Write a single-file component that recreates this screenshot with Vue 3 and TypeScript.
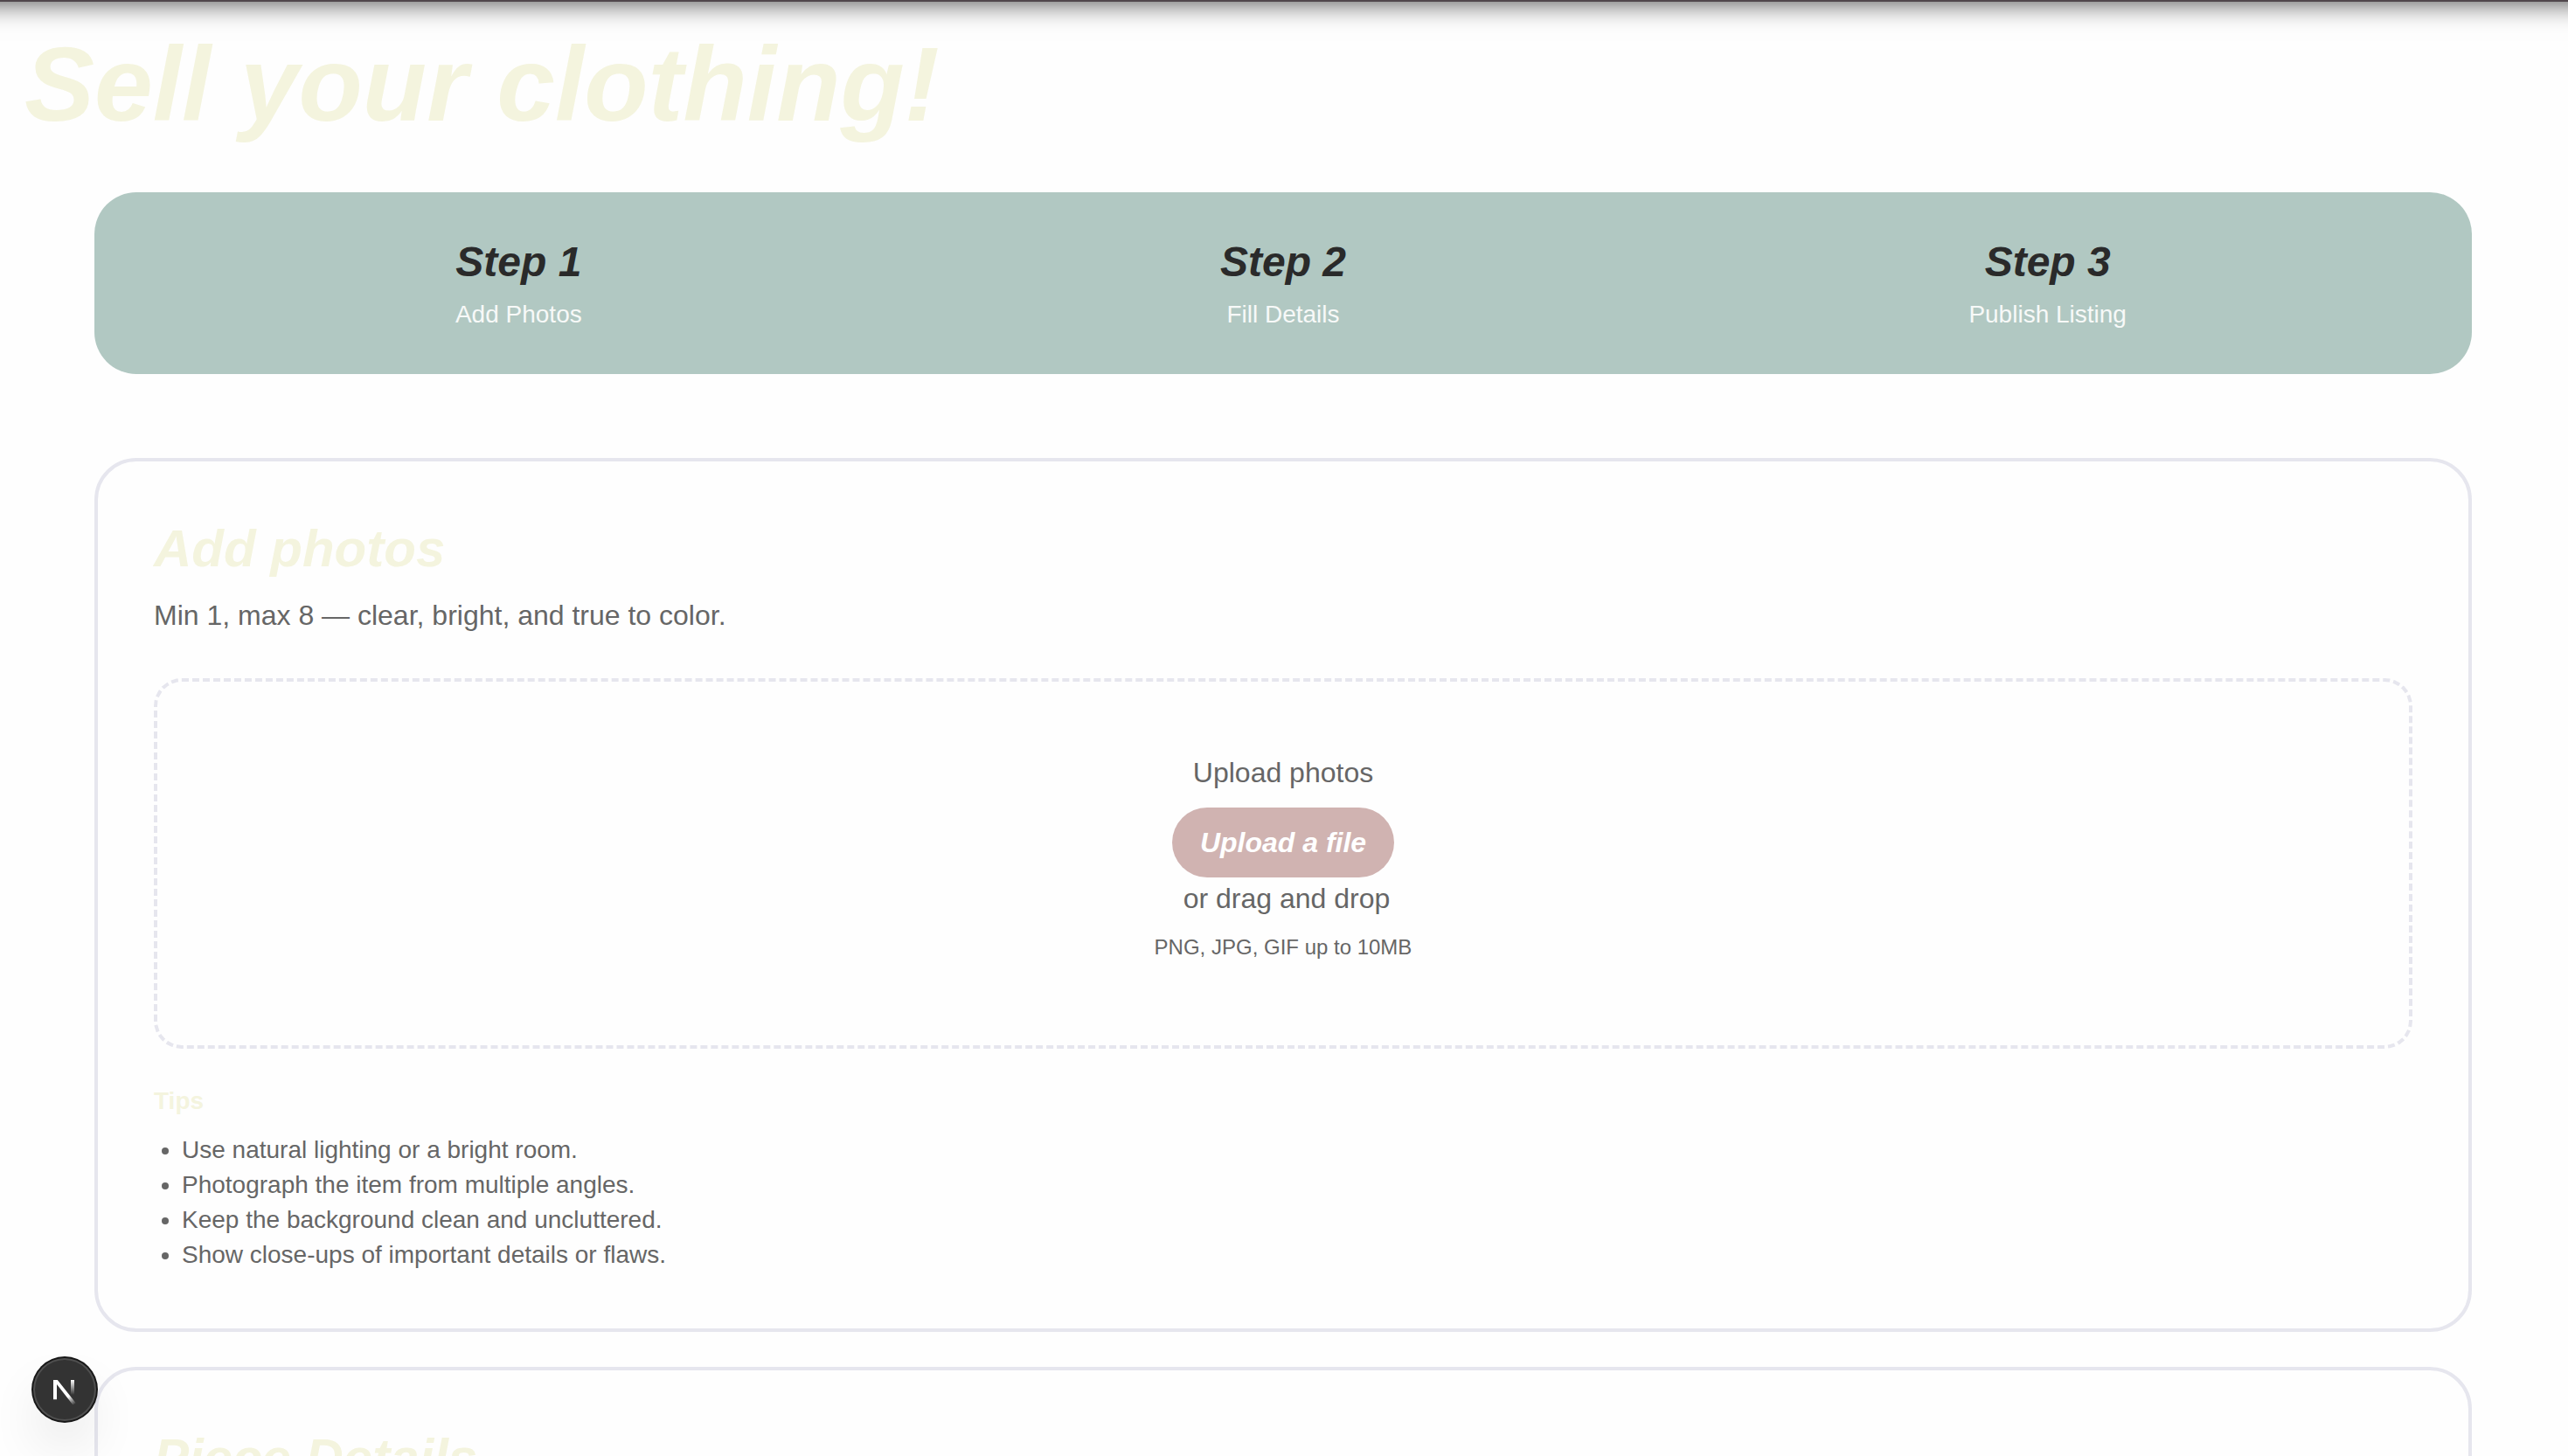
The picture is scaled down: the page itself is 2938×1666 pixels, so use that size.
<script setup lang="ts">
interface Step {
  title: string
  caption: string
}

const steps: Step[] = [
  { title: 'Step 1', caption: 'Add Photos' },
  { title: 'Step 2', caption: 'Fill Details' },
  { title: 'Step 3', caption: 'Publish Listing' },
]

const tips: string[] = [
  'Use natural lighting or a bright room.',
  'Photograph the item from multiple angles.',
  'Keep the background clean and uncluttered.',
  'Show close-ups of important details or flaws.',
]
</script>

<template>
  <div class="page">
    <div class="nav-edge" aria-hidden="true"></div>

    <h1 class="title">Sell your clothing!</h1>

    <main class="content">
      <ol class="steps">
        <li v-for="step in steps" :key="step.title" class="step">
          <span class="step-title">{{ step.title }}</span>
          <span class="step-caption">{{ step.caption }}</span>
        </li>
      </ol>

      <section class="card">
        <h2 class="card-title">Add photos</h2>
        <p class="card-lead">Min 1, max 8 — clear, bright, and true to color.</p>

        <div class="dropzone">
          <p class="drop-label">Upload photos</p>
          <button type="button" class="upload">Upload a file</button>
          <p class="drop-alt">or drag and drop</p>
          <p class="drop-note">PNG, JPG, GIF up to 10MB</p>
        </div>

        <h3 class="tips-title">Tips</h3>
        <ul class="tips">
          <li v-for="tip in tips" :key="tip">{{ tip }}</li>
        </ul>
      </section>

      <section class="card">
        <h2 class="card-title">Piece Details</h2>
      </section>
    </main>

    <button type="button" class="dev-badge" aria-label="Open developer tools">
      <svg viewBox="0 0 72 72" fill="none" aria-hidden="true">
        <defs>
          <linearGradient id="diagonal" gradientUnits="userSpaceOnUse" x1="39" y1="41" x2="48" y2="53">
            <stop offset="0" stop-color="#fff" />
            <stop offset="0.2" stop-color="#fff" />
            <stop offset="1" stop-color="#fff" stop-opacity="0" />
          </linearGradient>
          <linearGradient id="stem" gradientUnits="userSpaceOnUse" x1="45" y1="25" x2="45" y2="42">
            <stop offset="0" stop-color="#fff" />
            <stop offset="1" stop-color="#fff" stop-opacity="0" />
          </linearGradient>
        </defs>
        <path d="M23 25h4.8L48.800 51.6 45.400 53.6 27 30v17.300H23z" fill="url(#diagonal)" />
        <path d="M43 25h4v18H43z" fill="url(#stem)" />
      </svg>
    </button>
  </div>
</template>

<style>
body {
  margin: 0;
  background: #fefefe;
}
</style>

<style scoped>
.page {
  position: relative;
  height: 100vh;
  overflow: hidden;
  font-family: "Liberation Sans", Arial, Helvetica, sans-serif;
  font-size: 32px;
  line-height: 48px;
  color: #666;
}

h1,
h2,
h3,
p,
ul,
ol {
  margin: 0;
  padding: 0;
}

/* Lower edge of the navigation bar, which is scrolled almost out of view. */
.nav-edge {
  position: absolute;
  top: -98px;
  left: -40px;
  right: -40px;
  height: 100px;
  background: #50474c;
  box-shadow: 0 0 30px rgba(0, 0, 0, 0.75);
}

.title {
  padding: 36px 28px 64px;
  font-size: 120px;
  line-height: 120px;
  font-style: italic;
  color: #f4f4de;
}

.content {
  padding: 0 110px 0 108px;
}

.steps {
  display: grid;
  grid-template-columns: repeat(3, 1fr);
  padding: 48px;
  margin-bottom: 96px;
  border-radius: 48px;
  background: #b1c8c2;
  list-style: none;
}

.step {
  display: flex;
  flex-direction: column;
  align-items: center;
  gap: 8px;
}

.step-title {
  font-size: 48px;
  line-height: 64px;
  font-weight: 700;
  font-style: italic;
  color: #2a2a2a;
}

.step-caption {
  font-size: 28px;
  line-height: 40px;
  color: #f7f9f8;
}

.card {
  padding: 64px;
  margin-bottom: 40px;
  border: 4px solid #e6e6ee;
  border-radius: 48px;
}

.card-title {
  margin-bottom: 16px;
  font-size: 60px;
  line-height: 72px;
  font-style: italic;
  color: #f4f4de;
}

.dropzone {
  display: flex;
  flex-direction: column;
  align-items: center;
  margin: 48px 0 40px;
  padding: 80px 48px 96px;
  border: 4px dashed #e6e6ee;
  border-radius: 32px;
}

.upload {
  margin-top: 16px;
  padding: 16px 32px;
  border: 0;
  border-radius: 40px;
  background: #d0b3b1;
  color: #fff;
  font: italic 700 32px/48px "Liberation Sans", Arial, Helvetica, sans-serif;
}

.drop-alt {
  padding-left: 8px;
}

.drop-note {
  margin-top: 16px;
  font-size: 24px;
  line-height: 32px;
}

.tips-title {
  margin-bottom: 16px;
  font-size: 28px;
  line-height: 40px;
  color: #f4f4de;
}

.tips {
  padding-left: 32px;
  font-size: 28px;
  line-height: 40px;
}

.dev-badge {
  position: absolute;
  left: 38px;
  bottom: 40px;
  width: 72px;
  height: 72px;
  padding: 0;
  border: 0;
  border-radius: 50%;
  background: #333;
  box-shadow:
    0 0 0 2px #171717,
    inset 0 0 0 2px rgba(255, 255, 255, 0.14),
    0 32px 64px -16px rgba(0, 0, 0, 0.24);
}

.dev-badge svg {
  display: block;
  width: 72px;
  height: 72px;
}
</style>
